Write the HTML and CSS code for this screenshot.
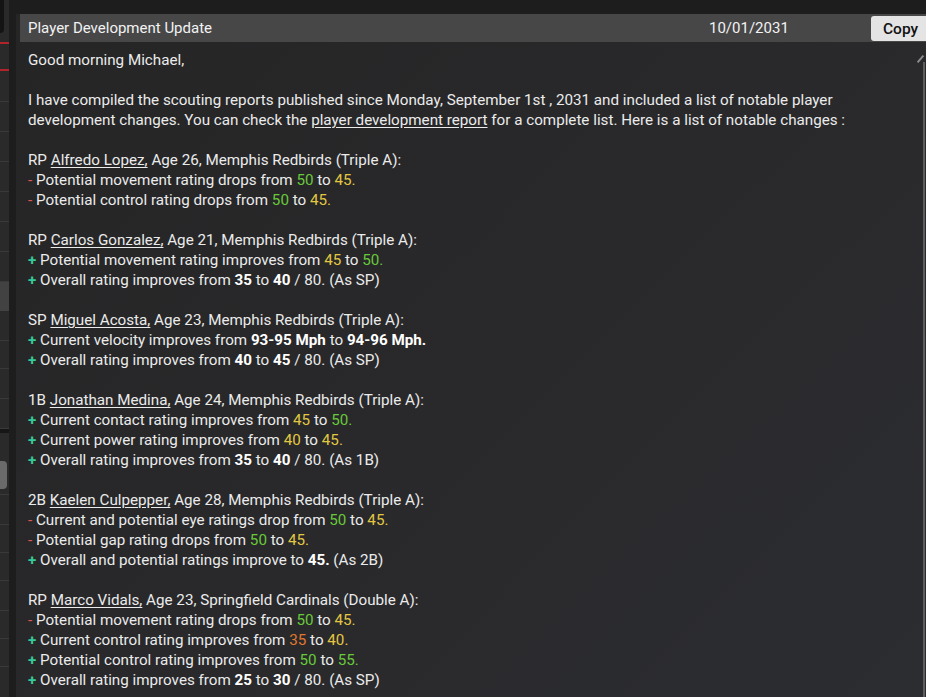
FILE: index.html
```html
<!DOCTYPE html>
<html>
<head>
<meta charset="utf-8">
<link rel="stylesheet" href="styles.css">
</head>
<body>
<div class="app">
  <aside class="sidebar">
    <div class="sb-top"><div class="sb-blob"></div></div>
    <div class="sb-red"></div>
    <div class="sb-gap26"></div>
    <div class="sb-red"></div>
    <div class="sb-row first"></div>
    <div class="sb-row"></div>
    <div class="sb-row"></div>
    <div class="sb-row"></div>
    <div class="sb-row"></div>
    <div class="sb-row"></div>
    <div class="sb-row"></div>
    <div class="sb-hl"></div>
    <div class="sb-row"></div>
    <div class="sb-row short"></div>
    <div class="sb-row"></div>
    <div class="sb-row"></div>
    <div class="sb-dark"></div>
    <div class="sb-btnwrap"><div class="sb-btn"></div></div>
    <div class="sb-row"></div>
    <div class="sb-row short"></div>
    <div class="sb-row short"></div>
    <div class="sb-row"></div>
    <div class="sb-row short"></div>
    <div class="sb-row short"></div>
  </aside>
  <main class="main">
    <div class="panel">
      <header class="titlebar">
        <span class="title">Player Development Update</span>
        <span class="date">10/01/2031</span>
        <button class="copy">Copy</button>
      </header>
      <div class="content">
        <div class="scroll-arrow"></div>
        <div class="scroll-track"></div>
        <p>Good morning Michael,</p>
        <p>I have compiled the scouting reports published since Monday, September 1st , 2031 and included a list of notable player<br>
        <span>development changes. You can check the</span> <u>player development report</u> <span>for a complete list. Here is a list of notable changes :</span></p>

        <p>RP <u>Alfredo Lopez,</u> Age 26, Memphis Redbirds (Triple A):<br>
        <span class="m">-</span> Potential movement rating drops from <span class="g">50</span> to <span class="y">45.</span><br>
        <span class="m">-</span> Potential control rating drops from <span class="g">50</span> to <span class="y">45.</span></p>

        <p>RP <u>Carlos Gonzalez,</u> Age 21, Memphis Redbirds (Triple A):<br>
        <span class="p">+</span> Potential movement rating improves from <span class="y">45</span> to <span class="g">50.</span><br>
        <span class="p">+</span> Overall rating improves from <b>35</b> to <b>40</b> / 80. (As SP)</p>

        <p>SP <u>Miguel Acosta,</u> Age 23, Memphis Redbirds (Triple A):<br>
        <span class="p">+</span> Current velocity improves from <b>93-95 Mph</b> to <b>94-96 Mph.</b><br>
        <span class="p">+</span> Overall rating improves from <b>40</b> to <b>45</b> / 80. (As SP)</p>

        <p>1B <u>Jonathan Medina,</u> Age 24, Memphis Redbirds (Triple A):<br>
        <span class="p">+</span> Current contact rating improves from <span class="y">45</span> to <span class="g">50.</span><br>
        <span class="p">+</span> Current power rating improves from <span class="y">40</span> to <span class="y">45.</span><br>
        <span class="p">+</span> Overall rating improves from <b>35</b> to <b>40</b> / 80. (As 1B)</p>

        <p>2B <u>Kaelen Culpepper,</u> Age 28, Memphis Redbirds (Triple A):<br>
        <span class="m">-</span> Current and potential eye ratings drop from <span class="g">50</span> to <span class="y">45.</span><br>
        <span class="m">-</span> Potential gap rating drops from <span class="g">50</span> to <span class="y">45.</span><br>
        <span class="p">+</span> Overall and potential ratings improve to <b>45.</b> (As 2B)</p>

        <p>RP <u>Marco Vidals,</u> Age 23, Springfield Cardinals (Double A):<br>
        <span class="m">-</span> Potential movement rating drops from <span class="g">50</span> to <span class="y">45.</span><br>
        <span class="p">+</span> Current control rating improves from <span class="o">35</span> to <span class="y">40.</span><br>
        <span class="p">+</span> Potential control rating improves from <span class="g">50</span> to <span class="g">55.</span><br>
        <span class="p">+</span> Overall rating improves from <b>25</b> to <b>30</b> / 80. (As SP)</p>
      </div>
    </div>
  </main>
</div>
</body>
</html>
```

FILE: styles.css
```css
* { box-sizing: border-box; }
html, body { margin: 0; padding: 0; }
body {
  width: 926px;
  height: 697px;
  overflow: hidden;
  background: #1d1d1e;
  font-family: Roboto, "Liberation Sans", sans-serif;
}
.app {
  display: flex;
  height: 697px;
}
.sidebar {
  width: 9px;
  flex: none;
  background: #2a2a2b;
  display: flex;
  flex-direction: column;
  overflow: hidden;
}
.sb-top { height: 42px; flex: none; }
.sb-blob {
  width: 4px;
  height: 33px;
  background: #141414;
  border-bottom-right-radius: 6px;
}
.sb-red { height: 2px; background: #b3232a; flex: none; }
.sb-gap26 { height: 25px; flex: none; }
.sb-row { height: 30px; flex: none; border-bottom: 1px solid #3a3a3b; }
.sb-row.first { height: 31px; }
.sb-row.short { height: 28px; }
.sb-hl { height: 29px; flex: none; background: #424243; }
.sb-dark { height: 4px; flex: none; background: #161616; }
.sb-btnwrap { height: 62px; flex: none; padding-top: 28px; border-bottom: 1px solid #3a3a3b; }
.sb-btn {
  width: 7px;
  height: 28px;
  background: #6a6a6b;
  border-radius: 0 4px 4px 0;
}
.main {
  flex: 1;
  margin-left: 7px;
  padding-top: 14px;
  display: flex;
  flex-direction: column;
}
.panel {
  flex: 1;
  background: linear-gradient(135deg, #252526 0%, #29292b 50%, #2c2d31 100%);
  display: flex;
  flex-direction: column;
}
.titlebar {
  margin-left: 4px;
  height: 28px;
  background: #474748;
  display: flex;
  align-items: center;
  color: #f2f2f2;
  font-size: 15px;
}
.title { padding-left: 8px; flex: 1; }
.date { width: 162px; }
.copy {
  width: 55px;
  height: 25px;
  margin: 1px 0 0 0;
  border: none;
  border-radius: 3px 0 0 3px;
  background: #e4e4e4;
  color: #111;
  font-family: Roboto, "Liberation Sans", sans-serif;
  font-size: 15.5px;
  font-weight: 500;
  text-align: left;
  padding: 0 0 0 12px;
}
.content {
  position: relative;
  flex: 1;
  padding: 8px 20px 0 12px;
  color: #ebebeb;
  font-size: 15.2px;
  line-height: 20px;
}
.content p { margin: 0 0 20px 0; }
.content u { text-underline-offset: 2px; }
.content b { font-weight: 700; color: #fff; }
.m { color: #e05555; }
.p { color: #35c99a; font-weight: 700; }
.g { color: #68c93a; }
.y { color: #e2c842; }
.o { color: #e0782e; }
.scroll-arrow {
  position: absolute;
  right: 1px;
  top: 16px;
  width: 9px;
  height: 2px;
  background: #8a8a8a;
  transform: rotate(-50deg);
}
.scroll-track {
  position: absolute;
  right: 1px;
  top: 20px;
  bottom: 0;
  width: 2px;
  background: #5e5e60;
}
```
